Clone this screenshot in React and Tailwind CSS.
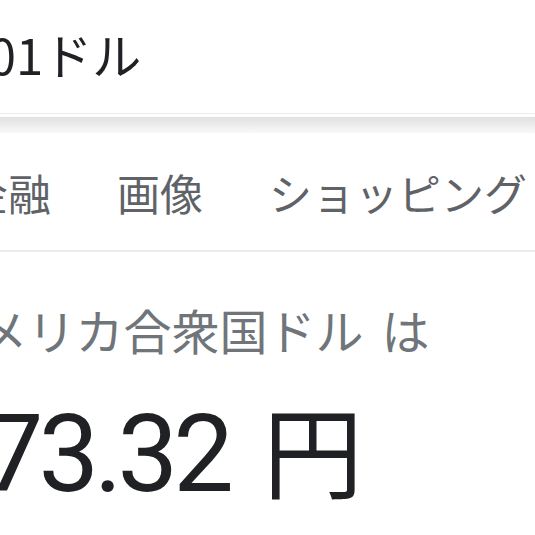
import React from "react";

const jp = { fontFamily: '"Noto Sans CJK JP", "Noto Sans", sans-serif' };
const num = { fontFamily: 'Roboto, "Noto Sans CJK JP", sans-serif' };

function SearchBar() {
	return (
		<div className="h-[113px] flex items-center bg-white overflow-hidden">
			<div className="ml-[-52px] text-[49px] leading-none text-[#202124] whitespace-nowrap pb-[6px]" style={jp}>
				1.01ドル
			</div>
		</div>
	);
}

function Tabs() {
	const tabs = ["金融", "画像", "ショッピング", "動画"];
	return (
		<div className="h-[117px] flex items-center gap-[66px] bg-white overflow-hidden whitespace-nowrap">
			{tabs.map((t, i) => (
				<div
					key={t}
					className={"shrink-0 text-[43px] leading-none text-[#5f6368] pt-[2px]" + (i === 0 ? " ml-[-35px]" : "")}
					style={jp}
				>
					{t}
				</div>
			))}
		</div>
	);
}

export default function App() {
	return (
		<div className="w-[535px] h-[535px] overflow-hidden bg-white">
			<SearchBar />
			<div className="border-t border-[#ececec]" />
			<div className="h-[3px] bg-white" />
			<div className="h-[16px] bg-gradient-to-b from-[#e0e0e0] via-[#ececec] to-[#f8f8f8]" />
			<Tabs />
			<div className="h-[2px] bg-[#ececec]" />
			<div className="pt-[53px] overflow-hidden whitespace-nowrap">
				<div className="flex items-end ml-[-66px] text-[48px] leading-none text-[#70757a]" style={jp}>
					<span>アメリカ合衆国ドル</span>
					<span className="ml-[18px]">は</span>
				</div>
				<div className="flex items-baseline ml-[-73px] mt-[45px] leading-none text-[#202124]">
					<span className="text-[108px] tracking-[-5px]" style={num}>173.32</span>
					<span className="ml-[34px] text-[100px]" style={jp}>円</span>
				</div>
			</div>
		</div>
	);
}
